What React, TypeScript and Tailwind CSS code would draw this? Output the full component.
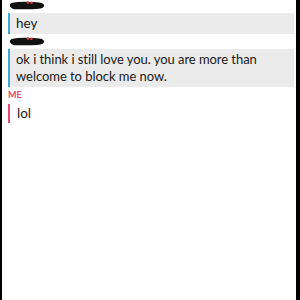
import React from "react";

function Scribble() {
  return (
    <svg width="36" height="9" viewBox="0 0 36 9" className="block">
      <path d="M3.5 4.5 C9 3, 15 3.2, 21 3.4 S 30 3.3, 32.5 4.6 C 30 6, 20 5.8, 12 5.8 S 5 5.8, 3.5 4.5 Z" fill="#111" stroke="#111" strokeWidth="5" strokeLinecap="round" strokeLinejoin="round" />
      <circle cx="19" cy="1.6" r="1.4" fill="#d8383f" />
      <circle cx="22.5" cy="1.8" r="1.3" fill="#d8383f" />
    </svg>
  );
}

export default function App() {
  return (
    <div className="w-[300px] h-[300px] bg-black flex [font-variant-ligatures:none]" style={{ fontFamily: "Lato, 'Open Sans', sans-serif" }}>
      <div className="ml-[2px] mr-[4px] flex-1 bg-white flex flex-col pl-[6px] pr-[2px]">
        <div className="mt-[1px] ml-[1px]"><Scribble /></div>
        <div className="mt-[3px] h-[21px] bg-[#ebebeb] border-l-2 border-[#3ea8de] pl-[6px] flex items-center text-[13.5px] text-[#1a1a1a] leading-none">
          hey
        </div>
        <div className="mt-[3px] ml-[1px]"><Scribble /></div>
        <div className="mt-[3px] h-[38px] bg-[#ebebeb] border-l-2 border-[#3ea8de] pl-[6px] flex flex-col justify-center text-[13px] tracking-[-0.05px] text-[#1a1a1a] leading-[17px]">
          <span>ok i think i still love you. you are more than</span>
          <span>welcome to block me now.</span>
        </div>
        <div className="mt-[3px] text-[9px] font-bold text-[#e8496b] leading-[10px]">ME</div>
        <div className="mt-[4px] h-[19px] border-l-2 border-[#e8496b] pl-[7px] flex items-center text-[13.5px] text-[#1a1a1a] leading-none">
          lol
        </div>
      </div>
    </div>
  );
}
